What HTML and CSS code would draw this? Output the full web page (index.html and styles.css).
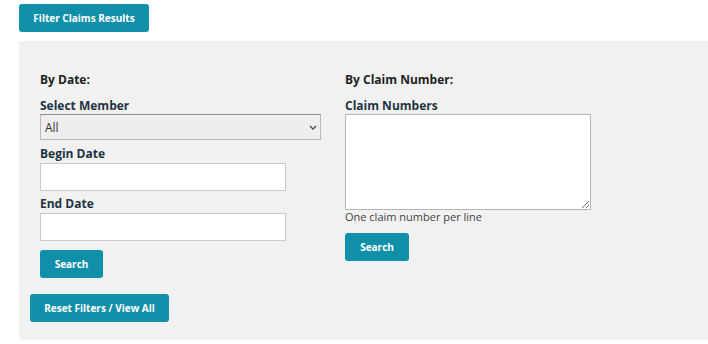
FILE: index.html
```html
<!DOCTYPE html>
<html lang="en">
<head>
    <meta charset="UTF-8">
    <meta name="viewport" content="width=device-width, initial-scale=1.0">
    <title>Filter Claims</title>
    <link rel="stylesheet" href="styles.css">
</head>
<body>

    <button type="button" class="btn btn-toggle">Filter Claims Results</button>

    <!-- Filter panel -->
    <div class="panel">
        <div class="columns">
            <form class="col" id="dateForm">
                <h4>By Date:</h4>
                <label for="member">Select Member</label>
                <div class="select-wrap">
                    <select id="member" name="member">
                        <option>All</option>
                    </select>
                    <svg class="chevron" width="8" height="5" viewBox="0 0 8 5"><path d="M1 1l3 3 3-3" fill="none" stroke="#444" stroke-width="1.3"/></svg>
                </div>
                <label for="beginDate">Begin Date</label>
                <input type="text" id="beginDate" name="beginDate">
                <label for="endDate">End Date</label>
                <input type="text" id="endDate" name="endDate">
                <button type="submit" class="btn btn-search">Search</button>
            </form>

            <form class="col" id="claimForm">
                <h4>By Claim Number:</h4>
                <label for="claims">Claim Numbers</label>
                <textarea id="claims" name="claims"></textarea>
                <div class="help">One claim number per line</div>
                <button type="submit" class="btn btn-search">Search</button>
            </form>
        </div>

        <button type="button" class="btn btn-reset">Reset Filters / View All</button>
    </div>

</body>
</html>
```

FILE: styles.css
```css
body {
    font-family: "Open Sans", Arial, sans-serif;
    margin: 0;
    padding: 4px 0 0 19px;
    background: #fff;
    color: #222;
}
.btn {
    display: block;
    height: 28px;
    padding: 0;
    font-family: inherit;
    font-size: 10px;
    font-weight: 700;
    color: #fff;
    background-color: #0f8fa8;
    border: none;
    border-radius: 3px;
    cursor: pointer;
}
.btn-toggle {
    width: 130px;
    margin-bottom: 9px;
}
.panel {
    background-color: #f1f1f2;
    padding: 31px 0 18px 11px;
    border-radius: 0 0 0 3px;
}
.columns {
    display: grid;
    grid-template-columns: 305px 1fr;
}
.col {
    display: flex;
    flex-direction: column;
    align-items: flex-start;
    padding-left: 10px;
}
h4 {
    margin: 0 0 10px;
    font-size: 12px;
    line-height: 16px;
    font-weight: 700;
    color: #222;
}
label {
    font-size: 12px;
    line-height: 16px;
    font-weight: 700;
    color: #1f3442;
}
.select-wrap {
    position: relative;
    margin-bottom: 6px;
}
select {
    display: block;
    width: 281px;
    height: 26px;
    padding: 0 4px;
    font-family: inherit;
    font-size: 12px;
    color: #333;
    background: #eeeef0;
    border: 1px solid #b9b9bb;
    border-top-color: #8e8e90;
    border-radius: 0;
    appearance: none;
}
.chevron {
    position: absolute;
    right: 4px;
    top: 11px;
}
input {
    width: 246px;
    height: 28px;
    box-sizing: border-box;
    margin: 1px 0 5px;
    background: #fff;
    border: 1px solid #c9c9cb;
}
#endDate {
    margin-bottom: 0;
}
textarea {
    width: 246px;
    height: 96px;
    box-sizing: border-box;
    margin: 0;
    background: #fff;
    border: 1px solid #b5b5b7;
    resize: vertical;
}
.help {
    font-size: 11px;
    line-height: 14px;
    color: #444;
}
.btn-search {
    width: 63px;
    margin-top: 9px;
}
#claimForm .btn-search {
    width: 64px;
}
.btn-reset {
    width: 139px;
    margin-top: 16px;
}
```
